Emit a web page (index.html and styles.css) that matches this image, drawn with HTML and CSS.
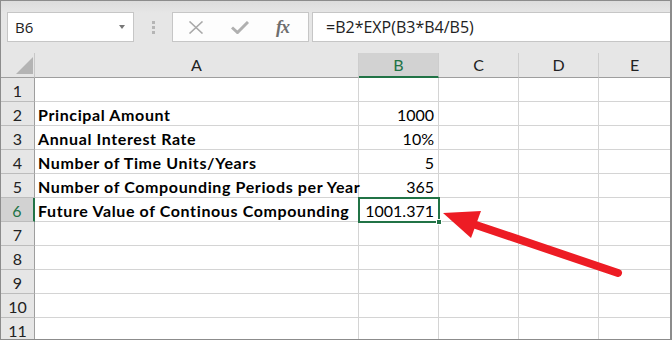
FILE: index.html
```html
<!DOCTYPE html>
<html lang="en">
<head>
    <meta charset="UTF-8">
    <title>Continuous Compounding</title>
    <link rel="stylesheet" href="styles.css">
</head>
<body>
    <div class="window">
        <div class="toolbar">
            <div class="name-box">
                <span>B6</span>
                <span class="caret"></span>
            </div>
            <div class="grip"><i></i><i></i><i></i></div>
            <div class="fx-box">
                <svg class="icon" width="16" height="13" viewBox="0 0 16 13">
                    <path d="M1.5 0.5 L14.5 12.5 M14.5 0.5 L1.5 12.5" stroke="#a9a9a9" stroke-width="1.6" fill="none"/>
                </svg>
                <svg class="icon" width="18" height="13" viewBox="0 0 18 13">
                    <path d="M1 6.5 L6.5 11.5 L17 1" stroke="#b0b0b0" stroke-width="3" fill="none"/>
                </svg>
                <span class="fx">fx</span>
            </div>
            <div class="formula">=B2*EXP(B3*B4/B5)</div>
        </div>

        <div class="sheet">
            <div class="corner"><span class="corner-mark"></span></div>
            <div class="col-head">A</div>
            <div class="col-head active">B</div>
            <div class="col-head">C</div>
            <div class="col-head">D</div>
            <div class="col-head last">E</div>

            <div class="row-head">1</div>
            <div class="cell"></div><div class="cell"></div><div class="cell"></div><div class="cell"></div><div class="cell last"></div>

            <div class="row-head">2</div>
            <div class="cell label">Principal Amount</div><div class="cell num">1000</div><div class="cell"></div><div class="cell"></div><div class="cell last"></div>

            <div class="row-head">3</div>
            <div class="cell label">Annual Interest Rate</div><div class="cell num">10%</div><div class="cell"></div><div class="cell"></div><div class="cell last"></div>

            <div class="row-head">4</div>
            <div class="cell label">Number of Time Units/Years</div><div class="cell num">5</div><div class="cell"></div><div class="cell"></div><div class="cell last"></div>

            <div class="row-head">5</div>
            <div class="cell label">Number of Compounding Periods per Year</div><div class="cell num">365</div><div class="cell"></div><div class="cell"></div><div class="cell last"></div>

            <div class="row-head active">6</div>
            <div class="cell label">Future Value of Continous Compounding</div><div class="cell num selected">1001.371<span class="handle"></span></div><div class="cell"></div><div class="cell"></div><div class="cell last"></div>

            <div class="row-head">7</div>
            <div class="cell"></div><div class="cell"></div><div class="cell"></div><div class="cell"></div><div class="cell last"></div>

            <div class="row-head">8</div>
            <div class="cell"></div><div class="cell"></div><div class="cell"></div><div class="cell"></div><div class="cell last"></div>

            <div class="row-head">9</div>
            <div class="cell"></div><div class="cell"></div><div class="cell"></div><div class="cell"></div><div class="cell last"></div>

            <div class="row-head">10</div>
            <div class="cell"></div><div class="cell"></div><div class="cell"></div><div class="cell"></div><div class="cell last"></div>

            <div class="row-head">11</div>
            <div class="cell"></div><div class="cell"></div><div class="cell"></div><div class="cell"></div><div class="cell last"></div>
        </div>

        <!-- annotation arrow pointing at the result -->
        <svg class="arrow" width="672" height="340" viewBox="0 0 672 340">
            <line x1="618" y1="273" x2="470" y2="223" stroke="#ed1c24" stroke-width="8" stroke-linecap="round"/>
            <polygon points="443,213 481,211 471,238" fill="#ed1c24"/>
        </svg>
    </div>
</body>
</html>
```

FILE: styles.css
```css
* {
    margin: 0;
    padding: 0;
    box-sizing: border-box;
}

body {
    background: white;
    width: 672px;
    height: 340px;
    overflow: hidden;
}

.window {
    position: relative;
    width: 672px;
    height: 340px;
    border: 1px solid #8c8c8c;
    border-right-width: 2px;
    background: #e6e6e6;
    overflow: hidden;
}

/* Formula bar */
.toolbar {
    height: 52px;
    display: flex;
    align-items: flex-start;
    padding: 11px 0 0 6px;
    background: linear-gradient(#dcdcdc, #e6e6e6 12px);
    font-family: "Open Sans", "Noto Sans", sans-serif;
    font-size: 15px;
    color: #222;
}

.name-box {
    width: 127px;
    height: 30px;
    background: white;
    border: 1px solid #c6c6c6;
    display: flex;
    align-items: center;
    justify-content: space-between;
    padding: 0 8px 0 7px;
}

.caret {
    width: 0;
    height: 0;
    border-left: 3.5px solid transparent;
    border-right: 3.5px solid transparent;
    border-top: 4px solid #777;
}

.grip {
    width: 38px;
    height: 30px;
    display: flex;
    flex-direction: column;
    align-items: center;
    justify-content: center;
    gap: 2px;
}

.grip i {
    width: 3px;
    height: 3px;
    background: #b5b5b5;
}

.fx-box {
    width: 137px;
    height: 30px;
    background: #fdfdfd;
    border: 1px solid #c6c6c6;
    display: flex;
    align-items: center;
    padding-left: 15px;
    gap: 27px;
}

.fx {
    font-family: "Liberation Serif", serif;
    font-style: italic;
    font-weight: bold;
    font-size: 18px;
    color: #6e6e6e;
    letter-spacing: -1px;
}

.formula {
    flex: 1;
    height: 30px;
    margin-left: 3px;
    background: white;
    border: 1px solid #c6c6c6;
    border-right: none;
    display: flex;
    align-items: center;
    padding-left: 13px;
    font-size: 16px;
}

/* Grid */
.sheet {
    display: grid;
    grid-template-columns: 34px 324px 80px 80px 80px 1fr;
    grid-template-rows: 25px;
    grid-auto-rows: 24px;
    font-family: Lato, "Liberation Sans", sans-serif;
    font-size: 16px;
    color: #000;
    background: white;
}

.corner {
    background: #e6e6e6;
    border-right: 1px solid #c8c8c8;
    border-bottom: 1px solid #9e9e9e;
    position: relative;
}

.corner-mark {
    position: absolute;
    right: 1px;
    bottom: 3px;
    width: 0;
    height: 0;
    border-left: 17px solid transparent;
    border-bottom: 17px solid #b4b4b4;
}

.col-head {
    background: #e6e6e6;
    border-right: 1px solid #cdcdcd;
    border-bottom: 1px solid #9e9e9e;
    display: flex;
    align-items: flex-end;
    justify-content: center;
    line-height: 18px;
    padding-bottom: 3px;
    color: #222;
}

.col-head.last {
    border-right: none;
}

.col-head.active {
    background: #d2d2d2;
    color: #217346;
    border-bottom: 2px solid #217346;
    padding-bottom: 2px;
}

.row-head {
    background: #e6e6e6;
    border-right: 1px solid #9e9e9e;
    border-bottom: 1px solid #bcbcbc;
    display: flex;
    align-items: flex-end;
    justify-content: center;
    line-height: 18px;
    padding-bottom: 1px;
    color: #222;
}

.row-head.active {
    background: #d2d2d2;
    color: #217346;
    border-right: 2px solid #217346;
}

.cell {
    border-right: 1px solid #d4d4d4;
    border-bottom: 1px solid #d4d4d4;
    display: flex;
    align-items: flex-end;
    line-height: 18px;
    padding: 0 4px 1px 3px;
    white-space: nowrap;
}

.cell.last {
    border-right: none;
}

.label {
    font-weight: bold;
    letter-spacing: 0.62px;
}

.num {
    justify-content: flex-end;
}

.selected {
    position: relative;
    outline: 2px solid #217346;
    outline-offset: -1px;
}

.handle {
    position: absolute;
    right: -4px;
    bottom: -4px;
    width: 6px;
    height: 6px;
    background: #217346;
    border: 1px solid white;
}

.arrow {
    position: absolute;
    left: -1px;
    top: -1px;
}
```
